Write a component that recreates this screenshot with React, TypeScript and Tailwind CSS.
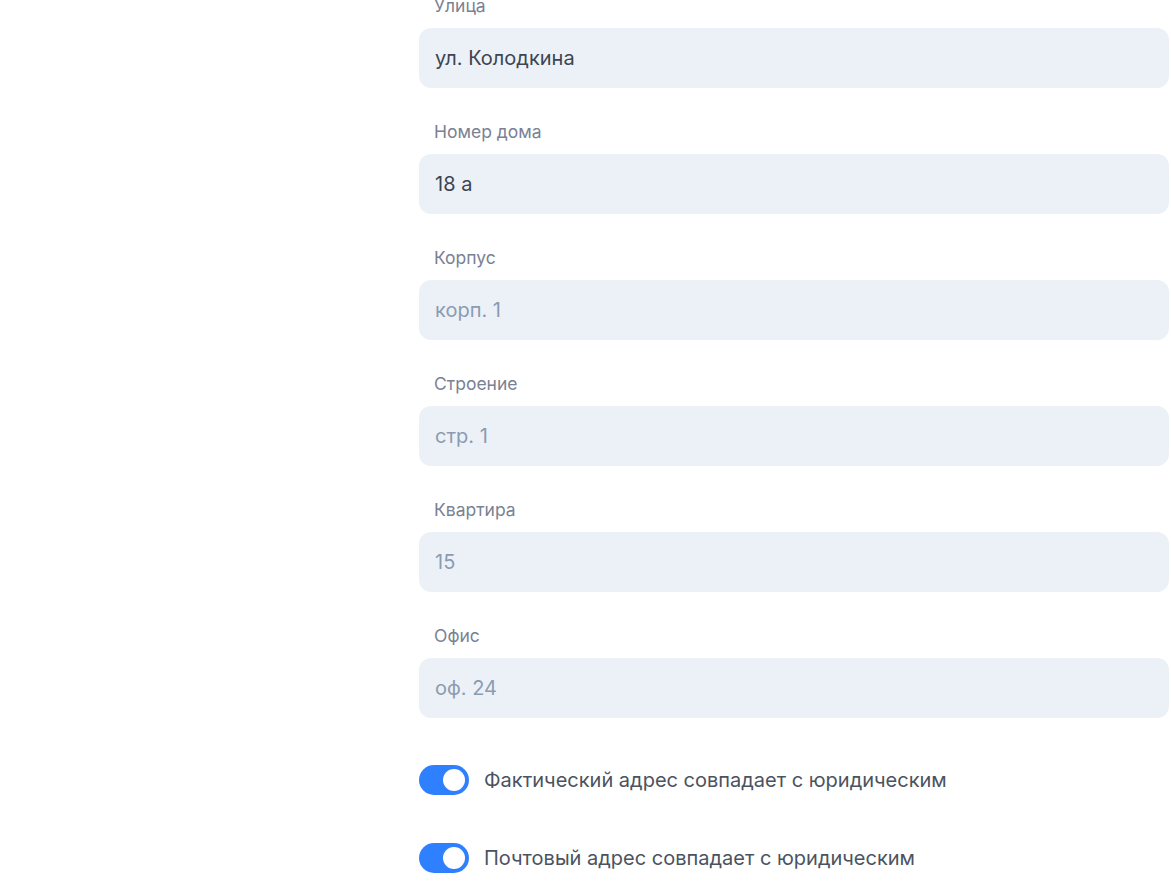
import React from "react";

interface Field {
  label: string;
  value?: string;
  placeholder?: string;
}

const fields: Field[] = [
  { label: "Улица", value: "ул. Колодкина" },
  { label: "Номер дома", value: "18 а" },
  { label: "Корпус", placeholder: "корп. 1" },
  { label: "Строение", placeholder: "стр. 1" },
  { label: "Квартира", placeholder: "15" },
  { label: "Офис", placeholder: "оф. 24" },
];

function Toggle({ text }: { text: string }) {
  return (
    <label className="flex items-center gap-[15px]">
      <span className="flex h-[30px] w-[50px] items-center justify-end rounded-full bg-[#2f80ff] px-[4px]">
        <span className="h-[22px] w-[22px] rounded-full bg-white" />
      </span>
      <span className="text-[20px] text-[#4a5361]">{text}</span>
    </label>
  );
}

export default function App() {
  return (
    <div
      className="min-h-[891px] bg-white"
      style={{ fontFamily: "Inter, 'Noto Sans', sans-serif" }}
    >
      <div className="-mt-[6.5px] ml-[419px] w-[750px]">
        {fields.map((f) => (
          <div key={f.label} className="mb-[32px]">
            <div className="mb-[10px] pl-[15px] text-[17.5px] leading-[24px] text-[#7a8193]">
              {f.label}
            </div>
            <input
              type="text"
              defaultValue={f.value}
              placeholder={f.placeholder}
              className="block h-[60px] w-full rounded-[12px] bg-[#ecf1f8] px-[16px] text-[20px] text-[#3c4550] placeholder-[#8b9bb2] outline-none"
            />
          </div>
        ))}
        <div className="mt-[16px] flex flex-col gap-[48px] pt-[15px]">
          <Toggle text="Фактический адрес совпадает с юридическим" />
          <Toggle text="Почтовый адрес совпадает с юридическим" />
        </div>
      </div>
    </div>
  );
}
